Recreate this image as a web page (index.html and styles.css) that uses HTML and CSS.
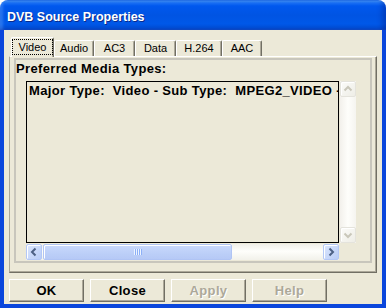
FILE: index.html
```html
<!DOCTYPE html>
<html lang="en">
<head>
    <meta charset="UTF-8">
    <title>DVB Source Properties</title>
    <link rel="stylesheet" href="styles.css">
</head>
<body>

<div class="window">
    <div class="titlebar">
        <span class="title">DVB Source Properties</span>
    </div>

    <div class="client">
        <div class="tabs">
            <div class="tab selected w-video"><span class="focus">Video</span></div>
            <div class="tab w-audio">Audio</div>
            <div class="tab w-ac3">AC3</div>
            <div class="tab w-data">Data</div>
            <div class="tab w-h264">H.264</div>
            <div class="tab w-aac">AAC</div>
        </div>

        <div class="panel">
            <div class="page">
                <div class="caption">Preferred Media Types:</div>

                <div class="listbox">
                    <div class="items">
                        <div class="item">Major Type:  Video - Sub Type:  MPEG2_VIDEO -</div>
                    </div>

                    <div class="vscroll">
                        <div class="sbtn disabled">
                            <svg width="14" height="14" viewBox="0 0 14 14"><polyline points="3.5,8.5 7,5 10.5,8.5" fill="none" stroke="#c9c7ba" stroke-width="2"/></svg>
                        </div>
                        <div class="vtrack"></div>
                        <div class="sbtn disabled">
                            <svg width="14" height="14" viewBox="0 0 14 14"><polyline points="3.5,5.5 7,9 10.5,5.5" fill="none" stroke="#c9c7ba" stroke-width="2"/></svg>
                        </div>
                    </div>

                    <div class="hscroll">
                        <div class="sbtn">
                            <svg width="14" height="14" viewBox="0 0 14 14"><polyline points="8.5,3.5 5,7 8.5,10.5" fill="none" stroke="#4d6185" stroke-width="2"/></svg>
                        </div>
                        <div class="thumb">
                            <svg width="8" height="6" viewBox="0 0 8 6">
                                <rect x="0" y="0" width="1" height="6" fill="#eef4fe"/>
                                <rect x="1" y="0" width="1" height="6" fill="#8cb0f8"/>
                                <rect x="2" y="0" width="1" height="6" fill="#eef4fe"/>
                                <rect x="3" y="0" width="1" height="6" fill="#8cb0f8"/>
                                <rect x="4" y="0" width="1" height="6" fill="#eef4fe"/>
                                <rect x="5" y="0" width="1" height="6" fill="#8cb0f8"/>
                                <rect x="6" y="0" width="1" height="6" fill="#eef4fe"/>
                                <rect x="7" y="0" width="1" height="6" fill="#8cb0f8"/>
                            </svg>
                        </div>
                        <div class="htrack"></div>
                        <div class="sbtn">
                            <svg width="14" height="14" viewBox="0 0 14 14"><polyline points="5.5,3.5 9,7 5.5,10.5" fill="none" stroke="#4d6185" stroke-width="2"/></svg>
                        </div>
                    </div>
                </div>
            </div>
        </div>

        <div class="buttons">
            <button class="btn">OK</button>
            <button class="btn">Close</button>
            <button class="btn" disabled>Apply</button>
            <button class="btn" disabled>Help</button>
        </div>
    </div>
</div>

</body>
</html>
```

FILE: styles.css
```css
body {
    margin: 0;
    background-color: #ffffff;
    font-family: 'Liberation Sans', Arial, sans-serif;
}

.window {
    width: 386px;
    height: 308px;
    display: flex;
    flex-direction: column;
    border-radius: 8px 8px 0 0;
    overflow: hidden;
}

.titlebar {
    height: 30px;
    box-sizing: border-box;
    padding: 4px 0 0 7px;
    display: flex;
    align-items: center;
    background: linear-gradient(to bottom, #0a64f4 0, #3d93ff 1px, #1a72f8 3px, #0058ee 6px, #0054e3 50%, #0058e8 80%, #004fd9 93%, #0040c4 100%);
    box-shadow: inset -4px 0 5px rgba(0, 20, 120, 0.35), inset 3px 0 3px rgba(120, 180, 255, 0.35);
}

.title {
    color: #ffffff;
    font-size: 12.5px;
    font-weight: bold;
    text-shadow: 1px 1px 0 #0a2a8a;
}

.client {
    flex: 1;
    display: flex;
    flex-direction: column;
    background-color: #ece9d8;
    border: 4px solid #0a46dc;
    border-top: none;
    padding: 7px 5px 0 5px;
    font-size: 11px;
}

/* tab strip */

.tabs {
    height: 19px;
    display: flex;
    align-items: flex-end;
    padding-left: 2px;
}

.tab {
    height: 16px;
    box-sizing: border-box;
    line-height: 15px;
    text-align: center;
    color: #000;
    border-top: 1px solid #ffffff;
    border-left: 1px solid #ffffff;
    border-right: 1px solid #716f64;
    box-shadow: inset -1px 0 0 #aca899;
    border-radius: 2px 2px 0 0;
}

.tab.selected {
    height: 20px;
    margin-bottom: -1px;
    position: relative;
    z-index: 1;
    background-color: #ece9d8;
    padding-top: 1px;
}

.focus {
    display: block;
    height: 16px;
    box-sizing: border-box;
    line-height: 14px;
    border: 1px dotted #000;
}

.w-video { width: 43px; }
.w-audio { width: 40px; }
.w-ac3 { width: 41px; }
.w-data { width: 41px; }
.w-h264 { width: 46px; }
.w-aac { width: 40px; }

/* tab page */

.panel {
    height: 217px;
    box-sizing: border-box;
    display: flex;
    padding: 1px 4px 9px 4px;
    border-top: 1px solid #ffffff;
    border-left: 1px solid #aca899;
    border-right: 1px solid #716f64;
    border-bottom: 1px solid #716f64;
    box-shadow: inset -1px -1px 0 #aca899;
}

.page {
    flex: 1;
    border: 2px solid #c8c6bc;
}

.caption {
    margin-top: 1px;
    font-size: 13px;
    font-weight: bold;
    letter-spacing: 0.35px;
    line-height: 15px;
}

.listbox {
    margin: 5px 0 0 10px;
    display: grid;
    grid-template-columns: 313px 16px;
    grid-template-rows: 162px 16px;
    column-gap: 1px;
    row-gap: 1px;
}

.items {
    border: 1px solid #000;
    overflow: hidden;
}

.item {
    padding: 1px 0 0 2px;
    white-space: pre;
    font-size: 13px;
    font-weight: bold;
    letter-spacing: 0.35px;
    line-height: 15px;
}

/* scroll bars */

.vscroll {
    display: flex;
    flex-direction: column;
    background: linear-gradient(to right, #f3f1ec, #fefefb 50%, #f5f4ef);
}

.vtrack {
    flex: 1;
}

.hscroll {
    display: flex;
    background: linear-gradient(to bottom, #f0efe8, #fefefb 45%, #f2f1ea);
}

.htrack {
    flex: 1;
}

.sbtn {
    width: 16px;
    height: 16px;
    box-sizing: border-box;
    display: flex;
    align-items: center;
    justify-content: center;
    border: 1px solid #b4c8f6;
    border-radius: 2px;
    background: linear-gradient(to bottom right, #dbe6fd, #b9cdf7);
    box-shadow: inset 1px 1px 0 #ffffff;
}

.sbtn.disabled {
    border-color: #e4e3dc;
    background: linear-gradient(to bottom right, #fbfbf9, #eeede6);
}

.thumb {
    width: 189px;
    margin-left: 1px;
    box-sizing: border-box;
    display: flex;
    align-items: center;
    justify-content: center;
    border: 1px solid #b0c4f4;
    border-radius: 2px;
    background: linear-gradient(to bottom, #cad9fc, #bccff8 60%, #b6c9f6);
    box-shadow: inset 1px 1px 0 #ffffff;
}

/* dialog buttons */

.buttons {
    display: flex;
    gap: 6px;
    margin-top: 6px;
}

.btn {
    width: 75px;
    height: 23px;
    padding: 0;
    box-sizing: border-box;
    font-family: 'Liberation Sans', Arial, sans-serif;
    font-size: 13px;
    font-weight: bold;
    letter-spacing: 0.35px;
    line-height: 21px;
    color: #000;
    background-color: #ece9d8;
    border-top: 1px solid #ffffff;
    border-left: 1px solid #ffffff;
    border-right: 1px solid #716f64;
    border-bottom: 1px solid #716f64;
    box-shadow: inset -1px -1px 0 #aca899;
    border-radius: 0;
}

.btn:disabled {
    color: #aca899;
    text-shadow: 1px 1px 0 #ffffff;
}
```
